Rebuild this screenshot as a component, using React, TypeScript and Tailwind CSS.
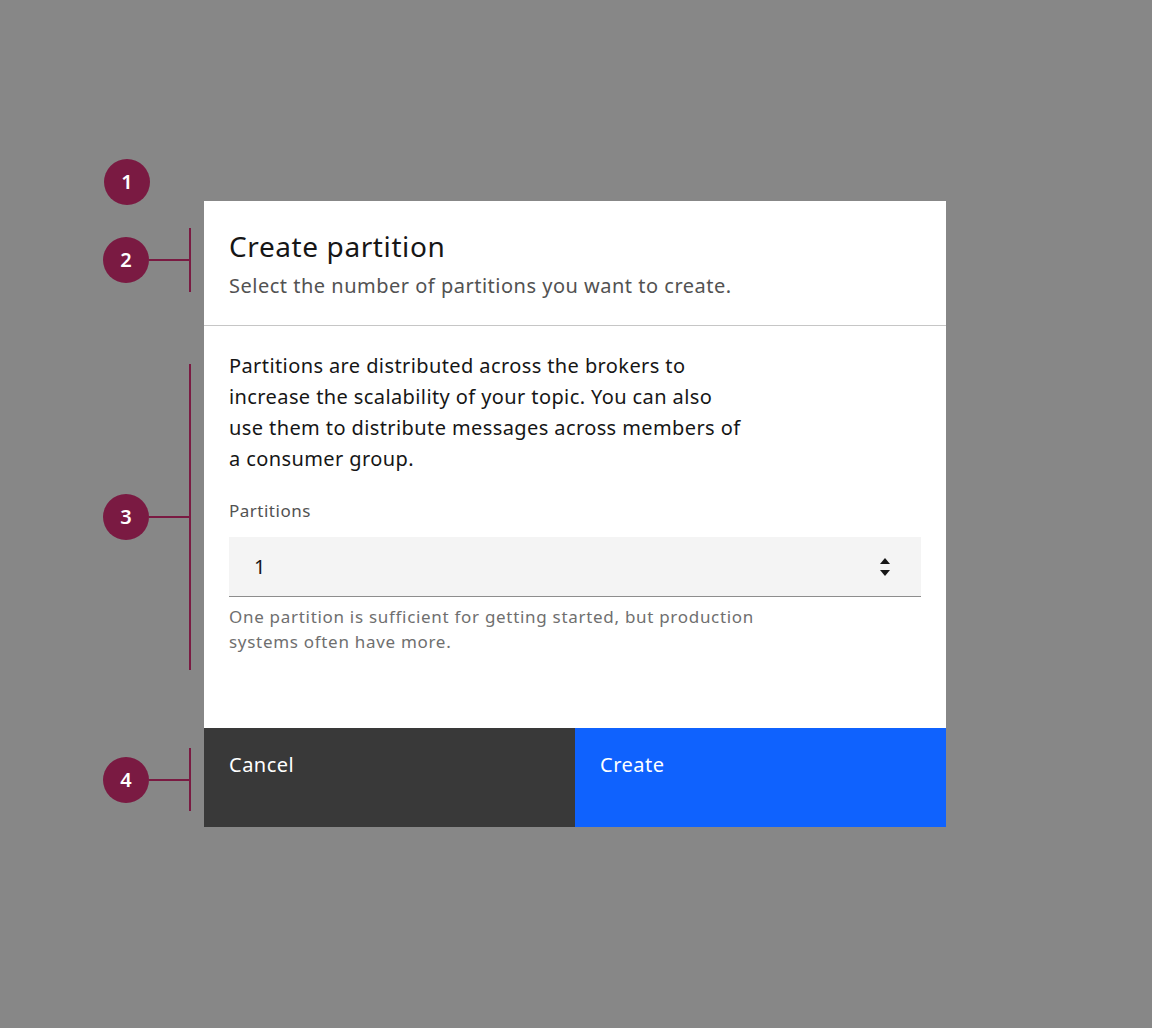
import React from 'react';

const font = { fontFamily: '"Noto Sans", "Open Sans", sans-serif' };

const Badge: React.FC<{ n: number }> = ({ n }) => (
  <div className="w-[46px] h-[46px] rounded-full bg-[#7a1a42] text-white flex items-center justify-center text-[20px] font-semibold shrink-0">
    {n}
  </div>
);

// bracket callout: badge + horizontal stub + vertical bar
const Callout: React.FC<{ n: number; height: number }> = ({ n, height }) => (
  <div className="flex items-center" style={{ height }}>
    <Badge n={n} />
    <div className="w-[40px] h-[2px] bg-[#7a1a42]" />
    <div className="w-[2px] h-full bg-[#7a1a42]" />
  </div>
);

const SpinIcon: React.FC = () => (
  <svg width="12" height="22" viewBox="0 0 12 22" className="text-[#161616]">
    <path d="M6 2 L11 8 L1 8 Z" fill="currentColor" />
    <path d="M1 14 L11 14 L6 20 Z" fill="currentColor" />
  </svg>
);

export default function App() {
  return (
    <div className="min-h-[1028px] w-full bg-[#878787] pt-[159px] pl-[104px]" style={font}>
      <div className="h-[46px] flex items-center">
        <Badge n={1} />
      </div>
      <div className="relative ml-[100px] -mt-[4px] w-[742px] bg-white flex flex-col">
        {/* header */}
        <div className="relative px-[25px] pt-[26px] pb-[25px] border-b border-[#c6c6c6]">
          <div className="absolute right-full top-[27px] mr-[13px]">
            <Callout n={2} height={64} />
          </div>
          <h2 className="text-[28px] leading-[38px] text-[#161616] font-normal tracking-[0.6px]">Create partition</h2>
          <p className="mt-[7px] text-[20px] leading-[28px] text-[#525252] tracking-[0.5px]">
            Select the number of partitions you want to create.
          </p>
        </div>
        {/* body */}
        <div className="relative h-[402px] px-[25px] pt-[24px]">
          <div className="absolute right-full top-[38px] mr-[13px]">
            <Callout n={3} height={306} />
          </div>
          <p className="max-w-[520px] text-[20px] leading-[31px] text-[#161616] tracking-[0.4px]">
            Partitions are distributed across the brokers to increase the scalability of your topic. You can also use
            them to distribute messages across members of a consumer group.
          </p>
          <label className="block mt-[27px] text-[17px] leading-[20px] text-[#525252] tracking-[0.5px]">Partitions</label>
          <div className="mt-[16px] h-[60px] bg-[#f4f4f4] border-b border-[#8d8d8d] flex items-center pl-[25px] pr-[30px]">
            <span className="flex-1 text-[20px] text-[#161616]">1</span>
            <SpinIcon />
          </div>
          <p className="mt-[7px] max-w-[540px] text-[17px] leading-[25px] text-[#6f6f6f] tracking-[0.7px]">
            One partition is sufficient for getting started, but production systems often have more.
          </p>
        </div>
        {/* footer */}
        <div className="relative h-[99px] flex">
          <div className="absolute right-full top-[20px] mr-[13px]">
            <Callout n={4} height={63} />
          </div>
          <button className="flex-1 bg-[#393939] text-white text-left px-[25px] pt-[23px] self-stretch flex items-start text-[20px] leading-[28px] tracking-[0.5px]">
            Cancel
          </button>
          <button className="flex-1 bg-[#0f62fe] text-white text-left px-[25px] pt-[23px] self-stretch flex items-start text-[20px] leading-[28px] tracking-[0.5px]">
            Create
          </button>
        </div>
      </div>
    </div>
  );
}
